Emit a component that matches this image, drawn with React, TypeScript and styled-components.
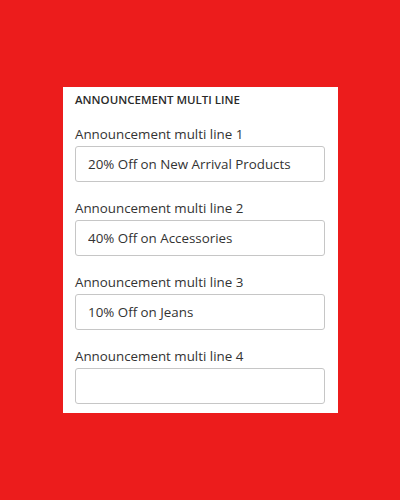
import styled, { createGlobalStyle } from "styled-components";

const GlobalStyle = createGlobalStyle`
  html, body {
    margin: 0;
    padding: 0;
    background: #ec1c1c;
  }
  body {
    font-family: "Open Sans", "Noto Sans", "Liberation Sans", sans-serif;
    color: #333;
  }
`;

const Page = styled.div`
  width: 400px;
  height: 500px;
  display: flex;
  justify-content: flex-start;
  align-items: flex-start;
  padding: 87px 0 0 63px;
  box-sizing: border-box;
`;

const Panel = styled.div`
  width: 275px;
  background: #fff;
  box-sizing: border-box;
  padding: 5px 13px 9px 12px;
`;

const Heading = styled.h4`
  margin: 0 0 16px;
  font-size: 11.5px;
  line-height: 16px;
  font-weight: 600;
  text-transform: uppercase;
  color: #2a2a2a;
`;

const Field = styled.div`
  display: flex;
  flex-direction: column;
  gap: 2px;

  & + & {
    margin-top: 16px;
  }
`;

const Label = styled.label`
  font-size: 13.35px;
  line-height: 20px;
  color: #333;
`;

const Input = styled.input`
  height: 36px;
  box-sizing: border-box;
  border: 1px solid #c6c6c6;
  border-radius: 3px;
  padding: 0 12px;
  font-family: inherit;
  font-size: 13.35px;
  color: #333;
  outline: none;
`;

const lines = [
  "20% Off on New Arrival Products",
  "40% Off on Accessories",
  "10% Off on Jeans",
  "",
];

const App = () => {
  return (
    <>
      <GlobalStyle />
      <Page>
        <Panel>
          <Heading>Announcement multi line</Heading>
          {lines.map((value, i) => (
            <Field key={i}>
              <Label>Announcement multi line {i + 1}</Label>
              <Input defaultValue={value} />
            </Field>
          ))}
        </Panel>
      </Page>
    </>
  );
};

export default App;
